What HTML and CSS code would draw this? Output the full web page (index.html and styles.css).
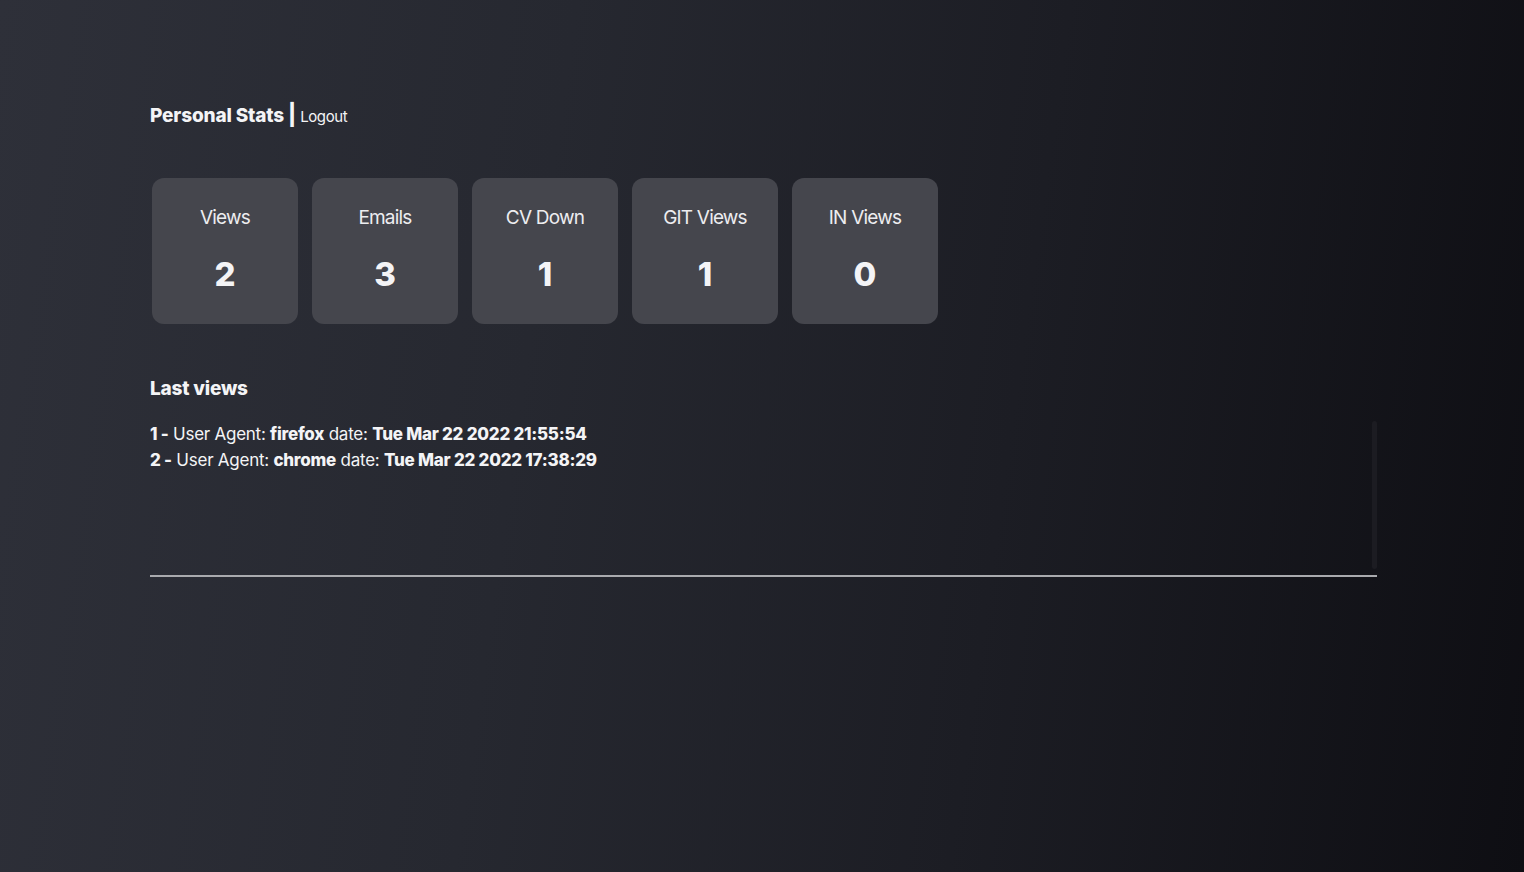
FILE: index.html
```html
<!DOCTYPE html>
<html>
<head>
<meta charset="utf-8">
<link rel="stylesheet" href="styles.css">
</head>
<body>
<main class="page">
  <header class="title">
    <span class="title-main">Personal Stats</span>
    <span class="title-sep">|</span>
    <a class="title-link">Logout</a>
  </header>
  <section class="cards">
    <div class="card"><div class="card-label">Views</div><div class="card-value">2</div></div>
    <div class="card"><div class="card-label">Emails</div><div class="card-value">3</div></div>
    <div class="card"><div class="card-label">CV Down</div><div class="card-value">1</div></div>
    <div class="card"><div class="card-label">GIT Views</div><div class="card-value">1</div></div>
    <div class="card"><div class="card-label">IN Views</div><div class="card-value">0</div></div>
  </section>
  <h2 class="section-title">Last views</h2>
  <div class="views-box">
    <div class="views-list">
      <div class="view-row"><b>1 -</b> User Agent: <b>firefox</b> date: <b>Tue Mar 22 2022 21:55:54</b></div>
      <div class="view-row"><b>2 -</b> User Agent: <b>chrome</b> date: <b>Tue Mar 22 2022 17:38:29</b></div>
    </div>
    <div class="scroll-track"></div>
  </div>
</main>
</body>
</html>
```

FILE: styles.css
```css
html, body {
  margin: 0;
  height: 100%;
}
body {
  background: linear-gradient(98deg, #2e3039 0%, #262830 35%, #1c1d24 65%, #0e0e13 100%);
  color: #f4f4f6;
  font-family: Inter, "Noto Sans", sans-serif;
  min-height: 872px;
}
.page {
  padding: 102px 147px 0 150px;
}
.title {
  display: flex;
  align-items: baseline;
  gap: 4px;
  height: 26px;
}
.title-main {
  font-size: 19px;
  font-weight: 800;
  letter-spacing: -0.15px;
}
.title-sep {
  font-size: 21px;
  font-weight: 800;
}
.title-link {
  font-size: 15px;
  color: #f4f4f6;
  letter-spacing: -0.4px;
}
.cards {
  display: flex;
  gap: 14px;
  margin-top: 50px;
  padding-left: 2px;
}
.card {
  width: 146px;
  height: 146px;
  box-sizing: border-box;
  background: #45464d;
  border-radius: 12px;
  display: flex;
  flex-direction: column;
  align-items: center;
  padding-top: 28px;
}
.card-label {
  font-size: 19px;
  color: #ededf0;
  letter-spacing: -0.8px;
  line-height: 24px;
}
.card-value {
  font-size: 33px;
  font-weight: 800;
  margin-top: 24px;
  line-height: 40px;
}
.section-title {
  font-size: 19px;
  font-weight: 800;
  margin: 53px 0 0;
  line-height: 24px;
  letter-spacing: -0.2px;
}
.views-box {
  margin-top: 18px;
  height: 158px;
  display: flex;
  border-bottom: 2px solid #a9aaae;
  box-sizing: border-box;
}
.views-list {
  flex: 1;
  padding-top: 2px;
}
.scroll-track {
  width: 5px;
  margin: 2px 0 6px;
  background: #1c1c22;
  border-radius: 3px;
}
.view-row {
  font-size: 17px;
  line-height: 26px;
  letter-spacing: -0.25px;
}
.view-row b {
  font-weight: 800;
}
```
